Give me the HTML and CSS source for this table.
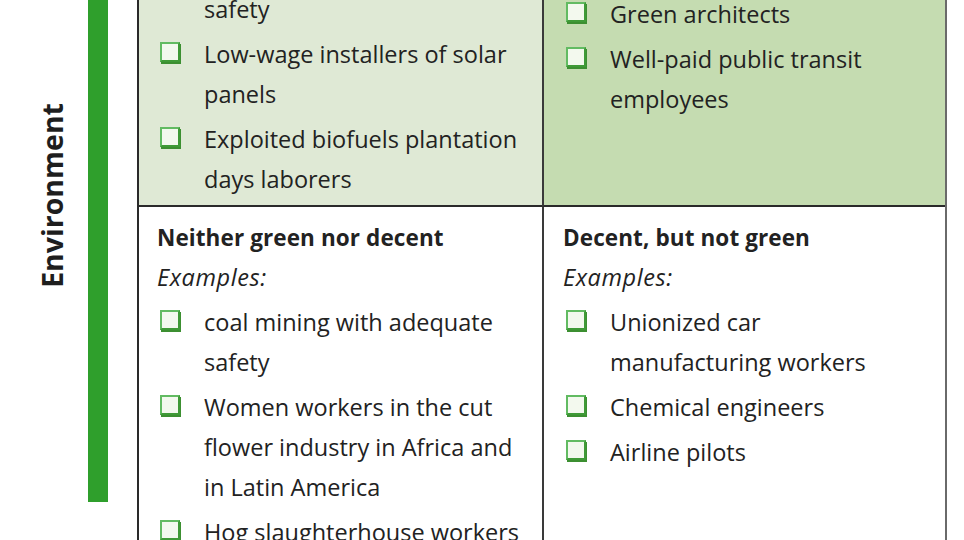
FILE: index.html
```html
<!DOCTYPE html>
<html>
<head>
<meta charset="utf-8">
<link rel="stylesheet" href="styles.css">
</head>
<body>
<div class="page">
  <div class="axis"><span class="axis-label">Environment</span></div>
  <div class="bar"></div>
  <div class="matrix">
    <div class="cell cell-tl">
      <ul class="items">
        <li class="item cont"><span class="txt">safety</span></li>
        <li class="item"><span class="cb"></span><span class="txt">Low-wage installers of solar panels</span></li>
        <li class="item"><span class="cb"></span><span class="txt">Exploited biofuels plantation days laborers</span></li>
      </ul>
    </div>
    <div class="cell cell-tr">
      <ul class="items">
        <li class="item"><span class="cb"></span><span class="txt">Green architects</span></li>
        <li class="item"><span class="cb"></span><span class="txt">Well-paid public transit employees</span></li>
      </ul>
    </div>
    <div class="cell cell-bl">
      <div class="heading">Neither green nor decent</div>
      <div class="examples">Examples:</div>
      <ul class="items">
        <li class="item"><span class="cb"></span><span class="txt">coal mining with adequate safety</span></li>
        <li class="item"><span class="cb"></span><span class="txt">Women workers in the cut flower industry in Africa and in Latin America</span></li>
        <li class="item"><span class="cb"></span><span class="txt">Hog slaughterhouse workers</span></li>
      </ul>
    </div>
    <div class="cell cell-br">
      <div class="heading">Decent, but not green</div>
      <div class="examples">Examples:</div>
      <ul class="items">
        <li class="item"><span class="cb"></span><span class="txt">Unionized car manufacturing workers</span></li>
        <li class="item"><span class="cb"></span><span class="txt">Chemical engineers</span></li>
        <li class="item"><span class="cb"></span><span class="txt">Airline pilots</span></li>
      </ul>
    </div>
  </div>
</div>
</body>
</html>
```
FILE: styles.css
```css
html, body {
  margin: 0;
  padding: 0;
  background: #ffffff;
  overflow: hidden;
}
body {
  width: 964px;
  height: 540px;
  font-family: "Open Sans", "Noto Sans", sans-serif;
  color: #222222;
}
.page {
  display: flex;
  align-items: flex-start;
  height: 540px;
}
.axis {
  width: 88px;
  height: 390px;
  display: flex;
  align-items: center;
  justify-content: center;
  flex: none;
}
.axis-label {
  writing-mode: vertical-rl;
  transform: rotate(180deg);
  font-weight: 700;
  font-size: 28.5px;
  color: #1e1e1e;
  margin-left: 16px;
}
.bar {
  width: 20px;
  height: 502px;
  background: #2f9f2c;
  flex: none;
}
.matrix {
  margin-left: 29px;
  margin-top: -60px;
  width: 810px;
  flex: none;
  display: grid;
  grid-template-columns: 403px 403px;
  grid-template-rows: 267px 400px;
  border-left: 2px solid #2a2a2a;
  border-right: 2px solid #6a6a6a;
  box-sizing: border-box;
}
.cell {
  box-sizing: border-box;
  font-size: 23.5px;
  line-height: 40px;
}
.cell-tl {
  background: #dfe9d5;
  border-bottom: 2px solid #2a2a2a;
  padding: 49px 0 0 18px;
}
.cell-tr {
  background: #c5dcb1;
  border-bottom: 2px solid #2a2a2a;
  border-left: 2px solid #3a3a3a;
  padding: 54px 0 0 19px;
}
.cell-bl {
  padding: 11px 0 0 18px;
}
.cell-br {
  border-left: 2px solid #3a3a3a;
  padding: 11px 0 0 19px;
}
.heading {
  font-weight: 700;
  font-size: 22.5px;
  letter-spacing: 0.1px;
}
.examples {
  font-style: italic;
  font-size: 23.5px;
  letter-spacing: 0.6px;
  margin-top: -1px;
}
.items {
  list-style: none;
  margin: 0;
  padding: 0;
}
.item {
  display: flex;
  align-items: flex-start;
  margin-top: 5px;
}
.cell-tl .item:first-child,
.cell-tr .item:first-child {
  margin-top: 0;
}
.cb {
  flex: none;
  box-sizing: border-box;
  width: 20px;
  height: 20px;
  margin: 8px 24px 0 3px;
  border: 2px solid #62bb62;
  border-right-color: #3f9a37;
  border-bottom-color: #3f9a37;
  box-shadow: 1px 2px 0 #3c8f31;
  background: #f3f9ee;
}
.cont .txt {
  margin-left: 47px;
}
.txt {
  width: 322px;
}
.cell-tr .txt,
.cell-br .txt {
  width: 300px;
}
```
